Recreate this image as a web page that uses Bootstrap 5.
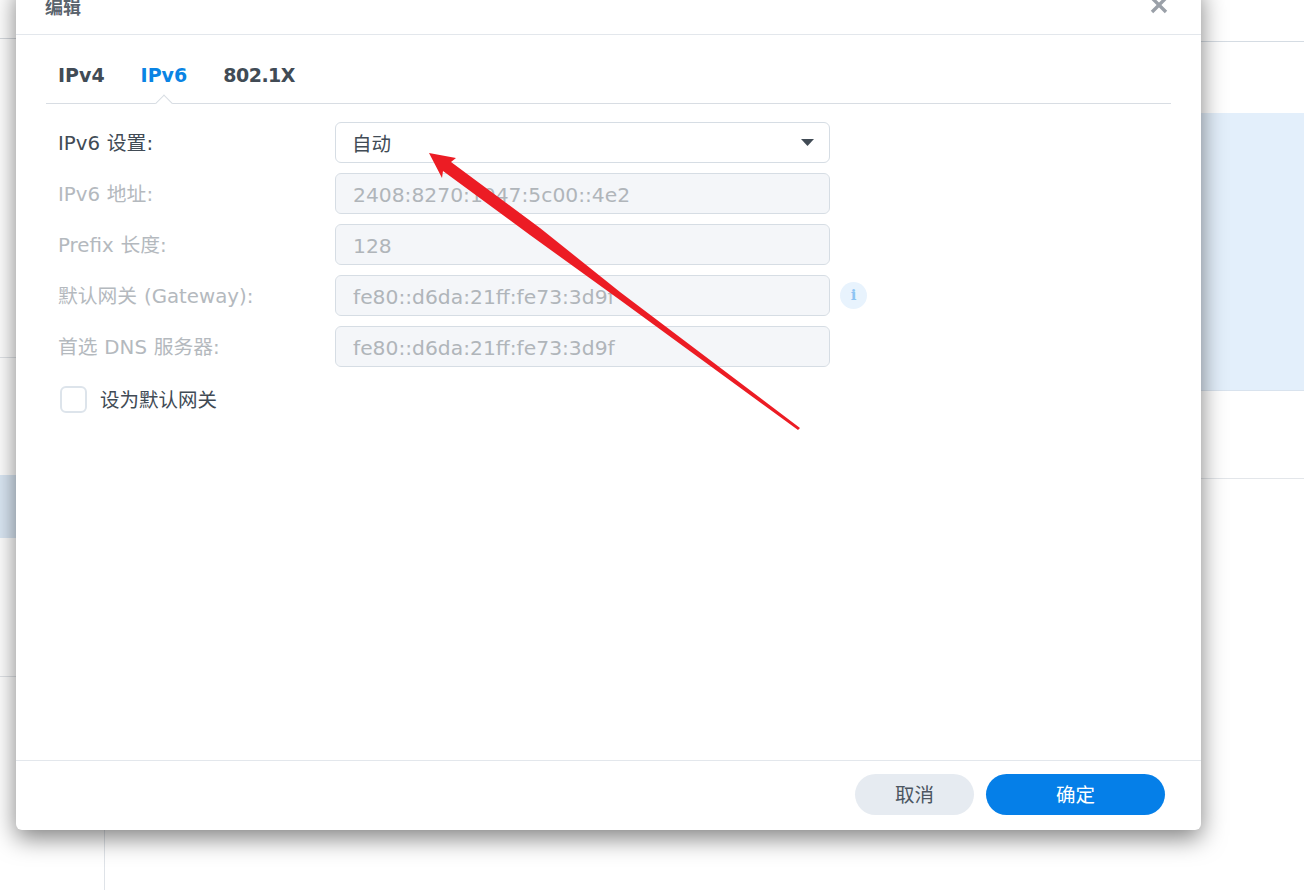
<!DOCTYPE html>
<html lang="zh-CN">
<head>
  <meta charset="UTF-8">
  <title>编辑</title>
  <link href="https://cdn.jsdelivr.net/npm/bootstrap@5.3.0/dist/css/bootstrap.min.css" rel="stylesheet">
  <style>
    html, body { height: 890px; overflow: hidden; }
    body { background-color: #fff; font-family: "DejaVu Sans", "Noto Sans CJK SC", sans-serif; font-size: 19.5px; color: #414b55; }

    /* page behind the dialog */
    .bg-side { width: 105px; height: 890px; border-right: 1px solid #dfe3e8; }
    .bg-main { min-width: 0; }
    .side-a { height: 39px; border-bottom: 1px solid #d5d9de; }
    .side-b { height: 319px; border-bottom: 1px solid #e0e3e7; }
    .side-gap { height: 117px; }
    .side-sel { height: 63px; background-color: #dbe8f5; }
    .side-c { height: 139px; border-bottom: 1px solid #e0e3e7; }
    .main-a { height: 42px; border-bottom: 1px solid #d5dce3; }
    .main-gap { height: 71px; }
    .main-sel { height: 278px; background-color: #e3effb; border-bottom: 1px solid #d9e3ee; }
    .main-b { height: 88px; border-bottom: 1px solid #e3e6ea; }

    /* dialog */
    .dlg { position: absolute; left: 16px; top: -16px; width: 1185px; height: 846px; background: #fff; border-radius: 6px; box-shadow: 0 8px 24px rgba(0, 0, 0, .5); }
    .dlg-head { height: 51px; padding-left: 29px; border-bottom: 1px solid #e3e7ec; }
    .dlg-title { font-size: 18px; line-height: 47px; color: #5a636d; font-weight: 700; }
    .dlg-x { top: 12px; right: 33px; }
    .dlg-body { padding: 0 30px; }
    .dlg-foot { height: 70px; padding: 13px 36px 15px 0; border-top: 1px solid #e3e7ec; gap: 12px; }

    .tabbar { height: 69px; border-bottom: 1px solid #d8dde3; padding-left: 12px; gap: 36px; }
    .tabbar .nav-link { padding: 0; height: 68px; line-height: 81px; position: relative; font-size: 19px; font-weight: 700; color: #414b55; }
    .tabbar .nav-link.active { color: #0a84e4; }
    .tabbar .nav-link.active::after { content: ""; position: absolute; left: 50%; bottom: -6px; width: 12px; height: 12px; margin-left: -6px; background: #fff; border-left: 1px solid #d8dde3; border-top: 1px solid #d8dde3; transform: rotate(45deg); }
    .tabbar .tab-narrow { letter-spacing: -.5px; }

    .frm { padding: 18px 0 0 12px; }
    .frm-row { height: 41px; margin-bottom: 10px; }
    .frm-label { width: 277px; flex: none; padding-top: 3px; font-size: 19.8px; word-spacing: .5px; }
    .frm-label.off { color: #b4b9be; }
    .frm-row .form-control, .frm-row .form-select { width: 495px; height: 41px; flex: none; padding: 2px 16px 0 17px; font-size: 20.3px; color: #414b55; border: 1px solid #d6dde4; border-radius: 6px; box-shadow: none; }
    .frm-row .form-select { padding: 4px 16px 0; font-size: 19.5px; background-image: url("data:image/svg+xml,%3Csvg xmlns='http://www.w3.org/2000/svg' width='13' height='7'%3E%3Cpath d='M0 0h13L6.5 7z' fill='%23414b55'/%3E%3C/svg%3E"); background-size: 13px 7px; background-position: right 15px center; }
    .frm-row .form-control:disabled { background-color: #f4f6f9; color: #b0b5ba; opacity: 1; }
    .tip-i { width: 27px; height: 27px; margin-left: 10px; border-radius: 50%; background: #e8f3fd; color: #8dc4f3; font-family: "DejaVu Serif", serif; font-weight: 700; font-size: 15px; line-height: 27px; text-align: center; }
    .frm-check { margin: 17px 0 0 2px; gap: 13px; }
    .frm-check label { padding-top: 2px; }
    .frm-check .form-check-input { width: 27px; height: 27px; margin: 0; border: 2px solid #dde4eb; border-radius: 6px; }

    .btn-cancel, .btn-ok { height: 41px; padding: 2px 0 0; border: 0; border-radius: 21px; font-size: 19.5px; }
    .btn-cancel { width: 119px; background: #e6ebf1; color: #4c5661; }
    .btn-ok { width: 179px; background: #057fe8; color: #fff; }

    .mark-arrow { position: absolute; left: 0; top: 0; pointer-events: none; }
  </style>
</head>
<body>
  <div class="d-flex">
    <div class="bg-side flex-shrink-0">
      <div class="side-a"></div>
      <div class="side-b"></div>
      <div class="side-gap"></div>
      <div class="side-sel"></div>
      <div class="side-c"></div>
    </div>
    <div class="bg-main flex-grow-1">
      <div class="main-a"></div>
      <div class="main-gap"></div>
      <div class="main-sel"></div>
      <div class="main-b"></div>
    </div>
  </div>

  <div class="dlg d-flex flex-column">
    <div class="dlg-head position-relative flex-shrink-0">
      <div class="dlg-title">编辑</div>
      <button type="button" class="dlg-x btn p-0 border-0 position-absolute d-flex" aria-label="关闭">
        <svg width="18" height="18" viewBox="0 0 18 18"><path d="M2 2l14 14M16 2L2 16" stroke="#9aa0a8" stroke-width="3.4" fill="none"/></svg>
      </button>
    </div>
    <div class="dlg-body flex-grow-1">
      <ul class="nav tabbar">
        <li class="nav-item"><a class="nav-link" href="#">IPv4</a></li>
        <li class="nav-item"><a class="nav-link active" href="#">IPv6</a></li>
        <li class="nav-item"><a class="nav-link tab-narrow" href="#">802.1X</a></li>
      </ul>
      <form class="frm">
        <div class="frm-row d-flex align-items-center">
          <label class="frm-label">IPv6 设置:</label>
          <select class="form-select"><option>自动</option></select>
        </div>
        <div class="frm-row d-flex align-items-center">
          <label class="frm-label off">IPv6 地址:</label>
          <input class="form-control" disabled value="2408:8270:1047:5c00::4e2">
        </div>
        <div class="frm-row d-flex align-items-center">
          <label class="frm-label off">Prefix 长度:</label>
          <input class="form-control" disabled value="128">
        </div>
        <div class="frm-row d-flex align-items-center">
          <label class="frm-label off">默认网关 (Gateway):</label>
          <input class="form-control" disabled value="fe80::d6da:21ff:fe73:3d9f">
          <span class="tip-i">i</span>
        </div>
        <div class="frm-row d-flex align-items-center">
          <label class="frm-label off">首选 DNS 服务器:</label>
          <input class="form-control" disabled value="fe80::d6da:21ff:fe73:3d9f">
        </div>
        <div class="frm-check d-flex align-items-center">
          <input class="form-check-input" type="checkbox" id="asGateway">
          <label for="asGateway">设为默认网关</label>
        </div>
      </form>
    </div>
    <div class="dlg-foot d-flex justify-content-end flex-shrink-0">
      <button type="button" class="btn btn-cancel">取消</button>
      <button type="button" class="btn btn-ok">确定</button>
    </div>
  </div>

  <svg class="mark-arrow" width="1304" height="890" viewBox="0 0 1304 890">
    <polygon points="429,153 456,158 451,162 540,228 620,292 800,428 798,430 620,300 530,235 443,171 442,178" fill="#ec1c24"/>
  </svg>
</body>
</html>
